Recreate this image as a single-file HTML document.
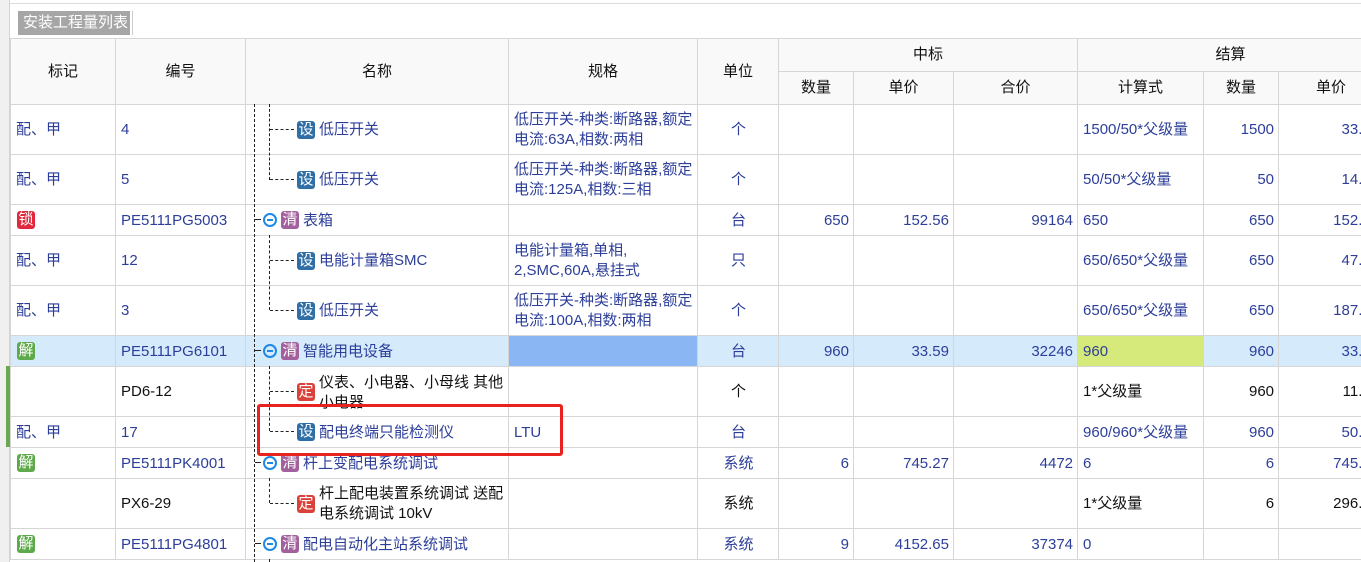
<!DOCTYPE html>
<html style="overflow:hidden;height:562px"><head><meta charset="utf-8"><style>
*{margin:0;padding:0;box-sizing:border-box}
body{width:1361px;height:562px;overflow:hidden;background:#fff;font-family:"Liberation Sans","Noto Sans CJK SC",sans-serif;font-size:15px;color:#2c3e99;position:relative}
.strip{position:absolute;left:0;top:0;width:10px;height:562px;background:#f0f0f0;border-right:1px solid #d4d4d4}
.topline{position:absolute;left:10px;top:3px;width:1351px;height:1px;background:#dcdcdc}
.tab{position:absolute;left:18px;top:11px;width:112px;height:24px;background:#a6a6a6;color:#fff;font-size:15px;line-height:24px;padding-left:5px}
.tabsep{position:absolute;left:132px;top:11px;width:1px;height:24px;background:#ccc}
table{position:absolute;left:10px;top:38px;border-collapse:collapse;table-layout:fixed;width:1373px}
td,th{border:1px solid #d6d6d6;overflow:hidden;white-space:nowrap;line-height:20px;vertical-align:middle}
th{background:#f9f9f9;color:#111;font-weight:normal;height:33px;font-size:15px}
td{padding:1px 4px 0 5px;position:relative}
.c{text-align:center}.r{text-align:right}
.k{color:#111}
.w{white-space:normal}
.hl td{background:#d5ebfc}
.ic{position:absolute;width:18px;height:18px;border-radius:3px;color:#fff;font-size:15px;line-height:18px;text-align:center;top:50%;margin-top:-9px}
.she{background:#2f6fa5}.qing{background:#a2609d}.ding{background:#d9413a}.jie{background:#5ea94a}.suo{background:#e0293c}
.mn{position:absolute;left:17px;top:50%;margin-top:-7px;width:14px;height:14px;border:2px solid #1e88e5;border-radius:50%}
.mn:after{content:"";position:absolute;left:2px;top:4px;width:6px;height:2px;background:#1e88e5}
.ch{padding-left:73px}.ch .ic{left:51px}
.pa{padding-left:57px}.pa .ic{left:35px}
.v{position:absolute;border-left:1px dashed #222;width:0}
.h{position:absolute;border-top:1px dashed #222;height:0}
.box{position:absolute;left:257px;top:404px;width:306px;height:52px;border:3px solid #e8231f;border-radius:3px}
.gbar{position:absolute;left:6px;top:366px;width:4px;height:81px;background:#6aa84f}
</style></head><body>
<div class="strip"></div><div class="gbar"></div>
<div class="topline"></div>
<div class="tab">安装工程量列表</div><div class="tabsep"></div>
<table>
<colgroup><col style="width:105px"><col style="width:130px"><col style="width:263px"><col style="width:189px"><col style="width:81px"><col style="width:75px"><col style="width:100px"><col style="width:124px"><col style="width:126px"><col style="width:75px"><col style="width:105px"></colgroup>
<tr><th rowspan="2">标记</th><th rowspan="2">编号</th><th rowspan="2">名称</th><th rowspan="2">规格</th><th rowspan="2">单位</th><th colspan="3">中标</th><th colspan="3">结算</th></tr>
<tr><th>数量</th><th>单价</th><th>合价</th><th>计算式</th><th>数量</th><th>单价</th></tr>
<tr style="height:50px"><td>配、甲</td><td>4</td><td class="ch"><span class="ic she">设</span>低压开关</td><td class="w">低压开关-种类:断路器,额定电流:63A,相数:两相</td><td class="c">个</td><td></td><td></td><td></td><td>1500/50*父级量</td><td class="r">1500</td><td class="r">33.56</td></tr>
<tr style="height:50px"><td>配、甲</td><td>5</td><td class="ch"><span class="ic she">设</span>低压开关</td><td class="w">低压开关-种类:断路器,额定电流:125A,相数:三相</td><td class="c">个</td><td></td><td></td><td></td><td>50/50*父级量</td><td class="r">50</td><td class="r">14.56</td></tr>
<tr style="height:31px"><td><span class="ic suo" style="left:6px">锁</span></td><td>PE5111PG5003</td><td class="pa"><span class="mn"></span><span class="ic qing">清</span>表箱</td><td></td><td class="c">台</td><td class="r">650</td><td class="r">152.56</td><td class="r">99164</td><td>650</td><td class="r">650</td><td class="r">152.56</td></tr>
<tr style="height:50px"><td>配、甲</td><td>12</td><td class="ch"><span class="ic she">设</span>电能计量箱SMC</td><td class="w">电能计量箱,单相,<br>2,SMC,60A,悬挂式</td><td class="c">只</td><td></td><td></td><td></td><td>650/650*父级量</td><td class="r">650</td><td class="r">47.56</td></tr>
<tr style="height:50px"><td>配、甲</td><td>3</td><td class="ch"><span class="ic she">设</span>低压开关</td><td class="w">低压开关-种类:断路器,额定电流:100A,相数:两相</td><td class="c">个</td><td></td><td></td><td></td><td>650/650*父级量</td><td class="r">650</td><td class="r">187.56</td></tr>
<tr class="hl" style="height:31px"><td><span class="ic jie" style="left:6px">解</span></td><td>PE5111PG6101</td><td class="pa"><span class="mn"></span><span class="ic qing">清</span>智能用电设备</td><td style="background:#8ab6f4"></td><td class="c">台</td><td class="r">960</td><td class="r">33.59</td><td class="r">32246</td><td style="background:#d6ea7c">960</td><td class="r">960</td><td class="r">33.59</td></tr>
<tr style="height:50px" class="k"><td></td><td class="k">PD6-12</td><td class="ch w k" style="padding-top:6px;vertical-align:top"><span class="ic ding" style="top:25px">定</span>仪表、小电器、小母线 其他小电器</td><td></td><td class="c k">个</td><td></td><td></td><td></td><td class="k">1*父级量</td><td class="r k">960</td><td class="r k">11.56</td></tr>
<tr style="height:31px"><td>配、甲</td><td>17</td><td class="ch"><span class="ic she">设</span>配电终端只能检测仪</td><td>LTU</td><td class="c">台</td><td></td><td></td><td></td><td>960/960*父级量</td><td class="r">960</td><td class="r">50.56</td></tr>
<tr style="height:31px"><td><span class="ic jie" style="left:6px">解</span></td><td>PE5111PK4001</td><td class="pa"><span class="mn"></span><span class="ic qing">清</span>杆上变配电系统调试</td><td></td><td class="c">系统</td><td class="r">6</td><td class="r">745.27</td><td class="r">4472</td><td>6</td><td class="r">6</td><td class="r">745.27</td></tr>
<tr style="height:50px"><td></td><td class="k">PX6-29</td><td class="ch w k"><span class="ic ding">定</span>杆上配电装置系统调试 送配电系统调试 10kV</td><td></td><td class="c k">系统</td><td></td><td></td><td></td><td class="k">1*父级量</td><td class="r k">6</td><td class="r k">296.45</td></tr>
<tr style="height:31px"><td><span class="ic jie" style="left:6px">解</span></td><td>PE5111PG4801</td><td class="pa"><span class="mn"></span><span class="ic qing">清</span>配电自动化主站系统调试</td><td></td><td class="c">系统</td><td class="r">9</td><td class="r">4152.65</td><td class="r">37374</td><td>0</td><td></td><td></td></tr>
</table>
<div class="v" style="left:254px;top:104px;height:458px"></div>
<div class="v" style="left:269px;top:104px;height:76px"></div>
<div class="v" style="left:269px;top:235px;height:75px"></div>
<div class="v" style="left:269px;top:366px;height:65px"></div>
<div class="v" style="left:269px;top:478px;height:25px"></div>
<div class="v" style="left:269px;top:559px;height:3px"></div>
<div class="h" style="left:270px;top:129px;width:24px"></div>
<div class="h" style="left:270px;top:179px;width:24px"></div>
<div class="h" style="left:255px;top:219px;width:6px"></div>
<div class="h" style="left:270px;top:260px;width:24px"></div>
<div class="h" style="left:270px;top:310px;width:24px"></div>
<div class="h" style="left:255px;top:350px;width:6px"></div>
<div class="h" style="left:270px;top:391px;width:24px"></div>
<div class="h" style="left:270px;top:431px;width:24px"></div>
<div class="h" style="left:255px;top:462px;width:6px"></div>
<div class="h" style="left:270px;top:503px;width:24px"></div>
<div class="h" style="left:255px;top:543px;width:6px"></div>
<div class="box"></div>
</body></html>
